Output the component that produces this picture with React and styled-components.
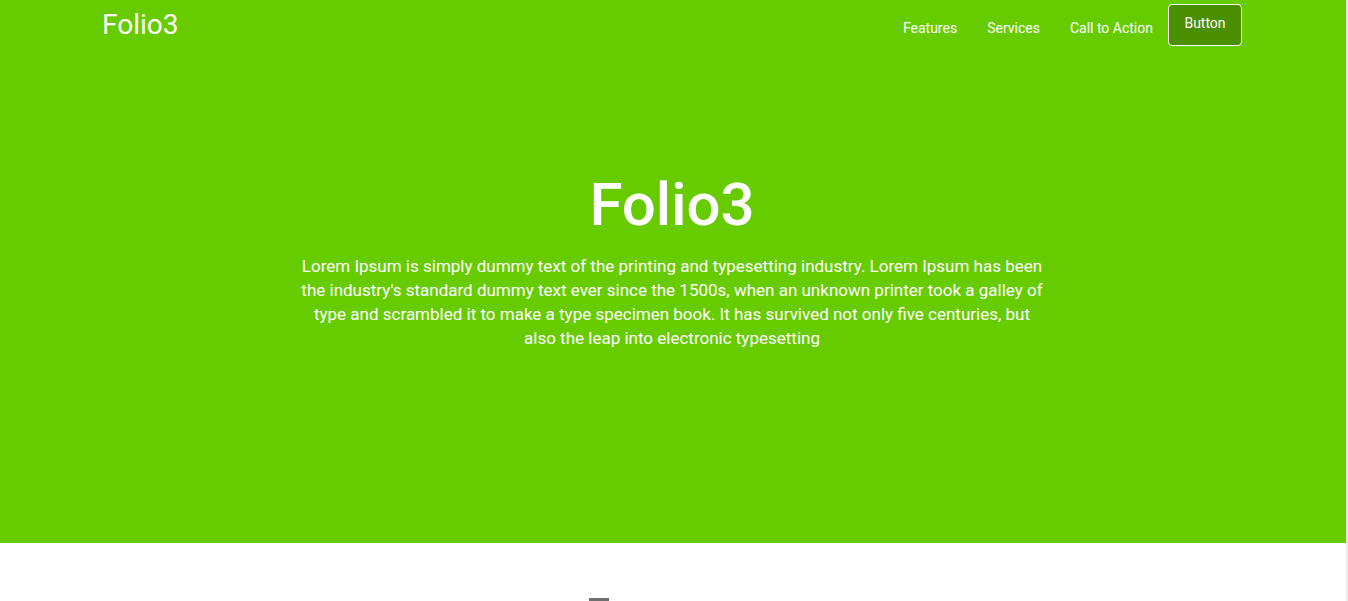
import React from 'react'
import styled, { createGlobalStyle } from 'styled-components'

const GlobalStyle = createGlobalStyle`
  html {
    background: #ededed;
  }
  body {
    margin: 0 2px 0 0;
    padding: 0;
    font-family: Roboto, "Liberation Sans", sans-serif;
    background: #fff;
  }
`

const Hero = styled.header`
  background: #66cc00;
  height: 543px;
  display: flex;
  flex-direction: column;
`

const Nav = styled.nav`
  width: 1140px;
  margin: 0 auto;
  padding-right: 2px;
  display: flex;
  align-items: center;
  justify-content: space-between;
  height: 50px;
`

const Brand = styled.a`
  color: #fff;
  font-size: 28px;
  text-decoration: none;
  line-height: 1;
  margin-top: -1px;
`

const Menu = styled.ul`
  list-style: none;
  margin: 0;
  padding: 0;
  display: flex;
  align-items: center;
`

const MenuLink = styled.a`
  color: #fff;
  font-size: 14px;
  text-decoration: none;
  padding: 0 15px;
  margin-top: 6px;
  display: block;
`

const Button = styled.button`
  background: #4a8f00;
  color: #fff;
  border: 1px solid #fff;
  border-radius: 4px;
  font-family: inherit;
  font-size: 14px;
  width: 74px;
  height: 42px;
  padding: 0 0 4px;
  margin-top: -1px;
`

const Intro = styled.div`
  text-align: center;
  color: #fff;
  margin-top: 125px;
  padding-right: 2px;
`

const Title = styled.h1`
  font-size: 60px;
  font-weight: 500;
  margin: 0;
  line-height: 1;
`

const Lead = styled.p`
  max-width: 750px;
  margin: 19px auto 0;
  font-size: 17px;
  line-height: 24px;
  font-weight: 400;
`

const Section = styled.section`
  height: 600px;
  display: flex;
  justify-content: center;
  padding-top: 55px;
  padding-right: 149px;
`

const Mark = styled.div`
  width: 20px;
  height: 6px;
  background: #6f6f6f;
`

const App = () => {
  return (
    <>
      <GlobalStyle />
      <Hero>
        <Nav>
          <Brand href='#'>Folio3</Brand>
          <Menu>
            <li><MenuLink href='#'>Features</MenuLink></li>
            <li><MenuLink href='#'>Services</MenuLink></li>
            <li><MenuLink href='#'>Call to Action</MenuLink></li>
            <li><Button>Button</Button></li>
          </Menu>
        </Nav>
        <Intro>
          <Title>Folio3</Title>
          <Lead>
            Lorem Ipsum is simply dummy text of the printing and typesetting industry. Lorem Ipsum has been
            the industry's standard dummy text ever since the 1500s, when an unknown printer took a galley of
            type and scrambled it to make a type specimen book. It has survived not only five centuries, but
            also the leap into electronic typesetting
          </Lead>
        </Intro>
      </Hero>
      <Section>
        <Mark />
      </Section>
    </>
  )
}

export default App
